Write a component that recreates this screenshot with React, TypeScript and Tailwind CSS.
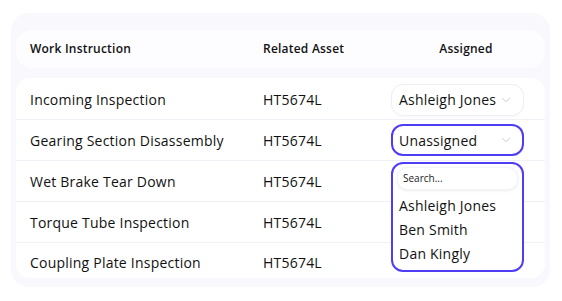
import { ChevronDown } from "lucide-react";

const rows = [
  { name: "Incoming Inspection", asset: "HT5674L" },
  { name: "Gearing Section Disassembly", asset: "HT5674L" },
  { name: "Wet Brake Tear Down", asset: "HT5674L" },
  { name: "Torque Tube Inspection", asset: "HT5674L" },
  { name: "Coupling Plate Inspection", asset: "HT5674L" },
];

const people = ["Ashleigh Jones", "Ben Smith", "Dan Kingly"];

const App = () => {
  return (
    <div
      className="w-[562px] h-[301px] bg-white pt-[13px] pl-[11px] text-[#111] tracking-[0.22px]"
      style={{ fontFamily: '"Open Sans", "Noto Sans", sans-serif' }}
    >
      <div className="w-[539px] h-[274px] rounded-[18px] bg-[#f8f8fd] px-[5px] pt-[17px]">
        <div className="h-[38px] rounded-[16px] bg-[#fdfdff] flex items-center text-[12px] font-semibold">
          <div className="w-[247px] pl-[14px]">Work Instruction</div>
          <div className="w-[140px]">Related Asset</div>
          <div className="flex-1 text-center pr-[16px]">Assigned</div>
        </div>
        <div className="relative mt-[10px] rounded-[14px] bg-white">
          {rows.map((row, i) => (
            <div
              key={row.name}
              className={
                "flex text-[14px] " +
                (i === 0 ? "h-[42px] items-center pt-[2px] " : "") +
                (i > 0 && i < rows.length - 1 ? "h-[41px] items-center " : "") +
                (i === rows.length - 1 ? "h-[35px] items-start pt-[9px] " : "") +
                (i < rows.length - 1 ? "border-b border-[#f0f0f6]" : "")
              }
            >
              <div className="w-[247px] pl-[14px]">{row.name}</div>
              <div className="w-[128px]">{row.asset}</div>
              {i === 0 && (
                <div className="w-[133px] h-[32px] rounded-[12px] border border-[#eeeef4] flex items-center pl-[7px] pr-[10px] shadow-[0_1px_2px_rgba(0,0,0,0.03)]">
                  <span className="flex-1">Ashleigh Jones</span>
                  <ChevronDown className="size-[14px] text-[#c4c4cc]" strokeWidth={1.5} />
                </div>
              )}
              {i === 1 && (
                <div className="w-[133px] h-[32px] rounded-[12px] border-2 border-[#4f3cf5] flex items-center pl-[6px] pr-[9px]">
                  <span className="flex-1">Unassigned</span>
                  <ChevronDown className="size-[14px] text-[#c4c4cc]" strokeWidth={1.5} />
                </div>
              )}
            </div>
          ))}
          <div className="absolute left-[375px] top-[84px] w-[133px] h-[110px] rounded-[12px] border-2 border-[#4f3cf5] bg-white px-[4px] pt-[3px] text-[14px]">
            <div className="h-[23px] rounded-[10px] bg-white shadow-[0_1px_3px_rgba(0,0,0,0.08)] border border-[#f3f3f8] flex items-center pl-[5px] text-[10px] tracking-normal text-[#222]">
              Search...
            </div>
            <div className="flex flex-col pl-[2px] pt-[6px] gap-[4px] leading-[20px]">
              {people.map((p) => (
                <div key={p}>{p}</div>
              ))}
            </div>
          </div>
        </div>
      </div>
    </div>
  );
};

export default App;
